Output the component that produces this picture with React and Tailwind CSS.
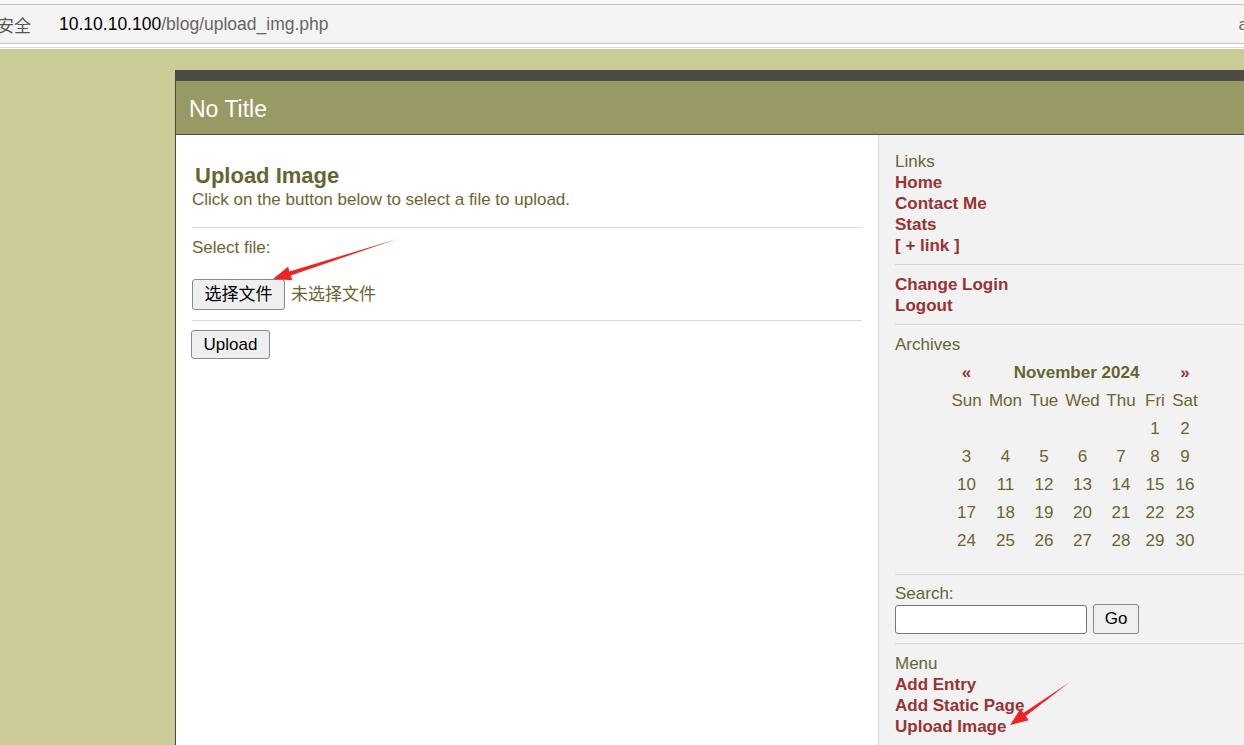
import React from "react";

const linkCls = "block font-bold text-[#993333] leading-[21px]";

function SideLinks({ items }) {
  return (
    <div>
      {items.map((t) => (
        <a key={t} href="#" className={linkCls}>
          {t}
        </a>
      ))}
    </div>
  );
}

function Calendar() {
  const weeks = [
    ["", "", "", "", "", "1", "2"],
    ["3", "4", "5", "6", "7", "8", "9"],
    ["10", "11", "12", "13", "14", "15", "16"],
    ["17", "18", "19", "20", "21", "22", "23"],
    ["24", "25", "26", "27", "28", "29", "30"],
  ];
  const days = ["Sun", "Mon", "Tue", "Wed", "Thu", "Fri", "Sat"];
  const cols = "grid grid-cols-[39px_39px_38px_39px_38px_30px_30px] h-[28px] items-center text-center";
  return (
    <div className="ml-[52px] mt-[4px] w-[253px] text-[#6e6431]">
      <div className={cols}>
        <a href="#" className="font-bold text-[#993333]">«</a>
        <div className="col-span-5 pr-[3px] font-bold text-[#666633]">November 2024</div>
        <a href="#" className="font-bold text-[#993333]">»</a>
      </div>
      <div className={cols}>
        {days.map((d) => (
          <div key={d}>{d}</div>
        ))}
      </div>
      {weeks.map((w, i) => (
        <div key={i} className={cols}>
          {w.map((d, j) => (
            <div key={j}>{d}</div>
          ))}
        </div>
      ))}
    </div>
  );
}

export default function App() {
  return (
    <div className="relative w-[1244px] h-[745px] overflow-hidden bg-[#cccc99] font-['Liberation_Sans','Noto_Sans_CJK_SC',sans-serif] text-[17px]">
      {/* browser address bar */}
      <div className="h-[49px] bg-white">
        <div className="h-[4px] bg-[#f7f7f7]" />
        <div className="flex h-[40px] items-center border-y border-[#c6c6c6] bg-[#f4f4f4] pt-[1px]">
          <span className="ml-[-3px] w-[62px] text-[17px] text-[#555] font-['Noto_Sans_CJK_SC',sans-serif]">安全</span>
          <span className="text-[17.5px] text-black">10.10.10.100</span>
          <span className="text-[17.5px] text-[#666]">/blog/upload_img.php</span>
          <span className="ml-auto mr-[-4px] text-[17px] text-[#666]">a</span>
        </div>
        <div className="h-[4px] border-b border-[#dcdcdc] bg-white" />
      </div>

      <div className="pl-[175px] pt-[21px]">
        <div className="w-[1200px] border-l border-[#4a4a3e]">
          <div className="h-[11px] bg-[#4d4c42]" />
          <div className="flex h-[54px] items-center border-b border-[#4d4c42] bg-[#999966] pl-[13px] pt-[3px] text-[23px] text-white">
            No Title
          </div>
          <div className="flex h-[620px]">
            {/* main */}
            <div className="w-[702px] bg-white px-[16px] pt-[28px] text-[#6e6431]">
              <h2 className="pl-[3px] text-[22px] font-bold leading-[26px] text-[#666633]">Upload Image</h2>
              <p className="leading-[21px]">Click on the button below to select a file to upload.</p>
              <hr className="mt-[17px] border-[#dadada]" />
              <div className="mt-[9px] leading-[21px]">Select file:</div>
              <div className="mt-[21px] flex items-center">
                <button className="h-[31px] w-[93px] rounded-[3px] border border-[#8a8a8a] bg-[#efefef] text-[17px] text-black">
                  选择文件
                </button>
                <span className="ml-[6px] text-[17px]">未选择文件</span>
              </div>
              <hr className="mt-[10px] border-[#dadada]" />
              <button className="ml-[-1px] mt-[9px] h-[29px] w-[79px] rounded-[3px] border border-[#8a8a8a] bg-[#efefef] text-[17px] text-black">
                Upload
              </button>
            </div>
            {/* sidebar */}
            <div className="flex-1 border-l border-[#d9d9d9] bg-[#f2f2f2] pl-[16px] pt-[16px] text-[#6e6431]">
              <div className="leading-[21px] text-[#666633]">Links</div>
              <SideLinks items={["Home", "Contact Me", "Stats", "[ + link ]"]} />
              <hr className="mt-[8px] mb-[9px] border-[#d6d6d6]" />
              <SideLinks items={["Change Login", "Logout"]} />
              <hr className="mt-[8px] mb-[9px] border-[#d6d6d6]" />
              <div className="leading-[21px] text-[#666633]">Archives</div>
              <Calendar />
              <hr className="mt-[19px] mb-[8px] border-[#d6d6d6]" />
              <div className="leading-[21px] text-[#666633]">Search:</div>
              <div className="flex items-center gap-[6px]">
                <input className="h-[29px] w-[192px] rounded-[3px] border border-[#767676] bg-white" />
                <button className="h-[30px] w-[46px] rounded-[3px] border border-[#8a8a8a] bg-[#efefef] text-[17px] text-black">
                  Go
                </button>
              </div>
              <hr className="mt-[9px] mb-[9px] border-[#d6d6d6]" />
              <div className="leading-[21px] text-[#666633]">Menu</div>
              <SideLinks items={["Add Entry", "Add Static Page", "Upload Image"]} />
            </div>
          </div>
        </div>
      </div>

      {/* red annotation arrows */}
      <svg className="pointer-events-none absolute left-0 top-0" width="1244" height="745">
        <polygon
          fill="#ee2424"
          points="273,279 288,266.8 289.5,271.6 397,239 290.7,275.4 292.3,280.2"
        />
        <polygon
          fill="#ee2424"
          points="1010,725 1020.5,708.8 1023.4,712.9 1070,682 1025.8,716.1 1028.7,720.2"
        />
      </svg>
    </div>
  );
}
